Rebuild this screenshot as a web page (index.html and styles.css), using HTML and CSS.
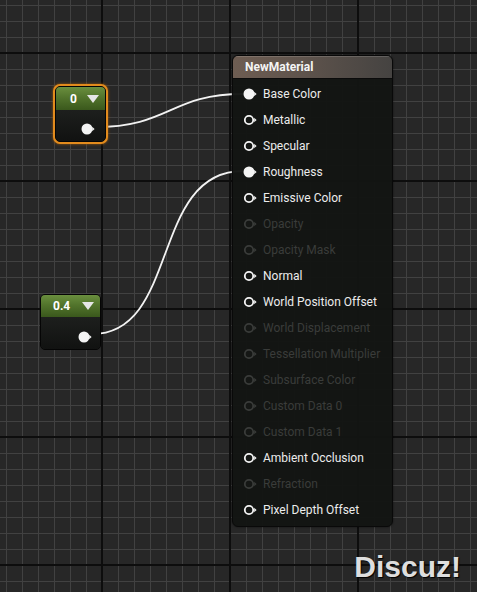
FILE: index.html
```html
<!DOCTYPE html>
<html>
<head>
<meta charset="utf-8">
<link rel="stylesheet" href="styles.css">
</head>
<body>
<div class="canvas">
  <svg class="wires" width="477" height="592" viewBox="0 0 477 592">
    <path d="M95 127 C 170 127, 170 94, 243 94" />
    <path d="M92 334 C 180 334, 150 171, 243 171" />
  </svg>

  <div class="scalar scalar-a selected">
    <div class="scalar-inner">
      <div class="scalar-head"><span class="val">0</span><span class="tri"></span></div>
      <div class="scalar-body">
        <svg class="pin" width="14" height="12" viewBox="0 0 14 12"><circle cx="6" cy="6" r="4.6" class="on"/><path d="M11.2 3.8 L13.6 6 L11.2 8.2Z" class="tip"/></svg>
      </div>
    </div>
  </div>

  <div class="scalar scalar-b">
    <div class="scalar-inner">
      <div class="scalar-head"><span class="val">0.4</span><span class="tri"></span></div>
      <div class="scalar-body">
        <svg class="pin" width="14" height="12" viewBox="0 0 14 12"><circle cx="6" cy="6" r="4.6" class="on"/><path d="M11.2 3.8 L13.6 6 L11.2 8.2Z" class="tip"/></svg>
      </div>
    </div>
  </div>

  <div class="material">
    <div class="mat-head">NewMaterial</div>
    <ul class="pins">
      <li class="row linked"><svg class="pin" width="14" height="12" viewBox="0 0 14 12"><circle cx="6" cy="6" r="4.6"/><path d="M11.2 3.8 L13.6 6 L11.2 8.2Z" class="tip"/></svg><span>Base Color</span></li>
      <li class="row"><svg class="pin" width="14" height="12" viewBox="0 0 14 12"><circle cx="6" cy="6" r="4.2"/><path d="M11.2 3.8 L13.6 6 L11.2 8.2Z" class="tip"/></svg><span>Metallic</span></li>
      <li class="row"><svg class="pin" width="14" height="12" viewBox="0 0 14 12"><circle cx="6" cy="6" r="4.2"/><path d="M11.2 3.8 L13.6 6 L11.2 8.2Z" class="tip"/></svg><span>Specular</span></li>
      <li class="row linked"><svg class="pin" width="14" height="12" viewBox="0 0 14 12"><circle cx="6" cy="6" r="4.6"/><path d="M11.2 3.8 L13.6 6 L11.2 8.2Z" class="tip"/></svg><span>Roughness</span></li>
      <li class="row"><svg class="pin" width="14" height="12" viewBox="0 0 14 12"><circle cx="6" cy="6" r="4.2"/><path d="M11.2 3.8 L13.6 6 L11.2 8.2Z" class="tip"/></svg><span>Emissive Color</span></li>
      <li class="row off"><svg class="pin" width="14" height="12" viewBox="0 0 14 12"><circle cx="6" cy="6" r="4.2"/><path d="M11.2 3.8 L13.6 6 L11.2 8.2Z" class="tip"/></svg><span>Opacity</span></li>
      <li class="row off"><svg class="pin" width="14" height="12" viewBox="0 0 14 12"><circle cx="6" cy="6" r="4.2"/><path d="M11.2 3.8 L13.6 6 L11.2 8.2Z" class="tip"/></svg><span>Opacity Mask</span></li>
      <li class="row"><svg class="pin" width="14" height="12" viewBox="0 0 14 12"><circle cx="6" cy="6" r="4.2"/><path d="M11.2 3.8 L13.6 6 L11.2 8.2Z" class="tip"/></svg><span>Normal</span></li>
      <li class="row"><svg class="pin" width="14" height="12" viewBox="0 0 14 12"><circle cx="6" cy="6" r="4.2"/><path d="M11.2 3.8 L13.6 6 L11.2 8.2Z" class="tip"/></svg><span>World Position Offset</span></li>
      <li class="row off"><svg class="pin" width="14" height="12" viewBox="0 0 14 12"><circle cx="6" cy="6" r="4.2"/><path d="M11.2 3.8 L13.6 6 L11.2 8.2Z" class="tip"/></svg><span>World Displacement</span></li>
      <li class="row off"><svg class="pin" width="14" height="12" viewBox="0 0 14 12"><circle cx="6" cy="6" r="4.2"/><path d="M11.2 3.8 L13.6 6 L11.2 8.2Z" class="tip"/></svg><span>Tessellation Multiplier</span></li>
      <li class="row off"><svg class="pin" width="14" height="12" viewBox="0 0 14 12"><circle cx="6" cy="6" r="4.2"/><path d="M11.2 3.8 L13.6 6 L11.2 8.2Z" class="tip"/></svg><span>Subsurface Color</span></li>
      <li class="row off"><svg class="pin" width="14" height="12" viewBox="0 0 14 12"><circle cx="6" cy="6" r="4.2"/><path d="M11.2 3.8 L13.6 6 L11.2 8.2Z" class="tip"/></svg><span>Custom Data 0</span></li>
      <li class="row off"><svg class="pin" width="14" height="12" viewBox="0 0 14 12"><circle cx="6" cy="6" r="4.2"/><path d="M11.2 3.8 L13.6 6 L11.2 8.2Z" class="tip"/></svg><span>Custom Data 1</span></li>
      <li class="row"><svg class="pin" width="14" height="12" viewBox="0 0 14 12"><circle cx="6" cy="6" r="4.2"/><path d="M11.2 3.8 L13.6 6 L11.2 8.2Z" class="tip"/></svg><span>Ambient Occlusion</span></li>
      <li class="row off"><svg class="pin" width="14" height="12" viewBox="0 0 14 12"><circle cx="6" cy="6" r="4.2"/><path d="M11.2 3.8 L13.6 6 L11.2 8.2Z" class="tip"/></svg><span>Refraction</span></li>
      <li class="row"><svg class="pin" width="14" height="12" viewBox="0 0 14 12"><circle cx="6" cy="6" r="4.2"/><path d="M11.2 3.8 L13.6 6 L11.2 8.2Z" class="tip"/></svg><span>Pixel Depth Offset</span></li>
    </ul>
  </div>

  <div class="watermark">Discuz!</div>
</div>
</body>
</html>
```
FILE: styles.css
```css
html, body {
  margin: 0;
  padding: 0;
  width: 477px;
  height: 592px;
  overflow: hidden;
  background: #262626;
}

.canvas {
  position: relative;
  width: 477px;
  height: 592px;
  font-family: Roboto, "Liberation Sans", sans-serif;
  background-color: #272727;
  background-image:
    linear-gradient(to right, #0d0d0d 2px, transparent 2px),
    linear-gradient(to bottom, #0d0d0d 2px, transparent 2px),
    linear-gradient(to right, #414141 1px, transparent 1px),
    linear-gradient(to bottom, #414141 1px, transparent 1px);
  background-size: 128px 128px, 128px 128px, 16px 16px, 16px 16px;
  background-position: 101px 0, 0 52px, 6px 0, 0 5px;
}

.wires {
  position: absolute;
  left: 0;
  top: 0;
  z-index: 1;
}

.wires path {
  fill: none;
  stroke: #f2f2f2;
  stroke-width: 1.8;
}

/* scalar parameter nodes */
.scalar {
  position: absolute;
  z-index: 2;
  border-radius: 7px;
}

.scalar.selected {
  padding: 2px;
  background: #e28b1d;
  box-shadow: 0 0 3px #9a5a10;
}

.scalar-a { left: 53px; top: 84px; }
.scalar-b { left: 40px; top: 294px; }

.scalar-inner {
  display: flex;
  flex-direction: column;
  border-radius: 5px;
  overflow: hidden;
  background: #141414;
  border: 1px solid #050505;
}

.scalar-a .scalar-inner { width: 49px; height: 54px; }
.scalar-b .scalar-inner { width: 59px; height: 54px; }

.scalar-head {
  display: flex;
  align-items: center;
  justify-content: space-between;
  height: 23px;
  padding: 0 6px 0 14px;
  background: linear-gradient(to bottom, #6a8f3e 0%, #52742c 45%, #3a581c 100%);
  color: #fff;
  font-weight: bold;
  font-size: 12px;
}

.scalar-b .scalar-head { padding-left: 12px; height: 22px; }

.tri {
  width: 0;
  height: 0;
  border-left: 6px solid transparent;
  border-right: 6px solid transparent;
  border-top: 8px solid #e6e6e6;
}

.scalar-body {
  flex: 1;
  display: flex;
  justify-content: flex-end;
  align-items: center;
  padding: 6px 6px 0 0;
  background: linear-gradient(to bottom, #1d1f1d, #111211);
}

.scalar-a .scalar-body { padding-right: 10px; }
.scalar-b .scalar-body { padding-right: 8px; padding-top: 8px; }

.pin circle {
  fill: #151715;
  stroke: #f4f4f4;
  stroke-width: 1.8;
}

.pin circle.on,
.row.linked .pin circle {
  fill: #f4f4f4;
}

.pin .tip { fill: #f4f4f4; }

/* material node */
.material {
  position: absolute;
  z-index: 2;
  left: 232px;
  top: 55px;
  width: 159px;
  border: 1px solid #090909;
  border-radius: 6px;
  overflow: hidden;
  background: rgba(19, 21, 19, 0.97);
  box-shadow: 0 0 2px rgba(0,0,0,0.6);
}

.mat-head {
  height: 22px;
  line-height: 22px;
  padding-left: 12px;
  color: #f4f4f4;
  font-weight: bold;
  font-size: 12px;
  background: linear-gradient(to right, #6e5d52 0%, #5e534c 45%, #454341 100%);
  border-bottom: 1px solid #0b0b0b;
  box-shadow: inset 0 1px 0 rgba(255,255,255,0.15);
}

.pins {
  list-style: none;
  margin: 0;
  padding: 2px 0 3px 0;
}

.row {
  display: flex;
  align-items: center;
  gap: 6px;
  height: 26px;
  padding-left: 10px;
  color: #ececec;
  font-size: 12px;
}

.row .pin { flex: none; }

.row.off { color: #3a3c3a; }
.row.off .pin circle { stroke: #3a3c3a; fill: #151715; }
.row.off .pin .tip { fill: #3a3c3a; }

.watermark {
  position: absolute;
  z-index: 3;
  right: 16px;
  bottom: 8px;
  font-family: "Liberation Sans", sans-serif;
  font-weight: bold;
  font-size: 30px;
  color: #dedede;
  text-shadow: 1px 1px 1px #000;
}
```
